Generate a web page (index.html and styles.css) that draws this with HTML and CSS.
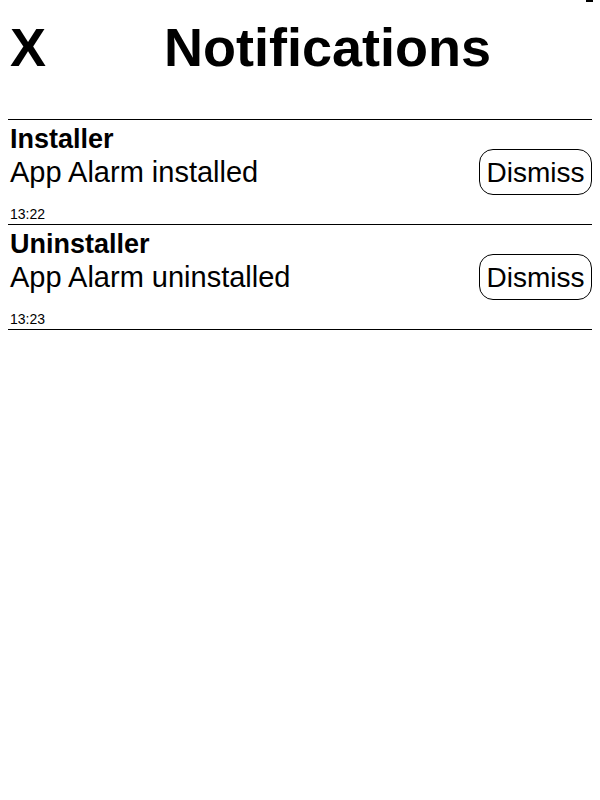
FILE: index.html
```html
<!DOCTYPE html>
<html>
<head>
<meta charset="utf-8">
<link rel="stylesheet" href="styles.css">
</head>
<body>
<div class="status-mark"></div>
<div class="header">
  <span class="close">X</span>
  <span class="title">Notifications</span>
</div>
<div class="item">
  <div class="content">
    <div class="app">Installer</div>
    <div class="msg">App Alarm installed</div>
    <div class="time">13:22</div>
  </div>
  <button class="dismiss">Dismiss</button>
</div>
<div class="item">
  <div class="content">
    <div class="app">Uninstaller</div>
    <div class="msg">App Alarm uninstalled</div>
    <div class="time">13:23</div>
  </div>
  <button class="dismiss">Dismiss</button>
</div>
</body>
</html>
```
FILE: styles.css
```css
html, body {
  background: #fff;
}
body {
  margin: 8px;
  font-family: "Liberation Sans", Arial, sans-serif;
  color: #000;
}
.status-mark {
  position: absolute;
  top: 0;
  left: 586px;
  width: 7px;
  height: 2px;
  background: #000;
}
.header {
  display: flex;
  align-items: baseline;
  padding-top: 8px;
  padding-left: 2px;
  padding-bottom: 41px;
  border-bottom: 1px solid #000;
}
.close, .title {
  font-size: 54px;
  font-weight: bold;
  line-height: 62px;
}
.title {
  margin-left: 118px;
}
.item {
  display: flex;
  align-items: center;
  border-bottom: 1px solid #000;
}
.content {
  flex: 1;
  padding-top: 4px;
  padding-bottom: 2px;
  padding-left: 2px;
}
.app {
  font-size: 27px;
  font-weight: bold;
  line-height: 31px;
}
.msg {
  font-size: 29px;
  line-height: 33px;
  margin-top: 1px;
}
.time {
  font-size: 14px;
  line-height: 16px;
  margin-top: 17px;
}
.dismiss {
  font-family: "Liberation Sans", Arial, sans-serif;
  font-size: 28px;
  line-height: 32px;
  color: #000;
  background: #fff;
  border: 1px solid #000;
  border-radius: 14px;
  width: 113px;
  height: 46px;
  padding: 2px 0 0 0;
  margin-right: 0;
}
```
